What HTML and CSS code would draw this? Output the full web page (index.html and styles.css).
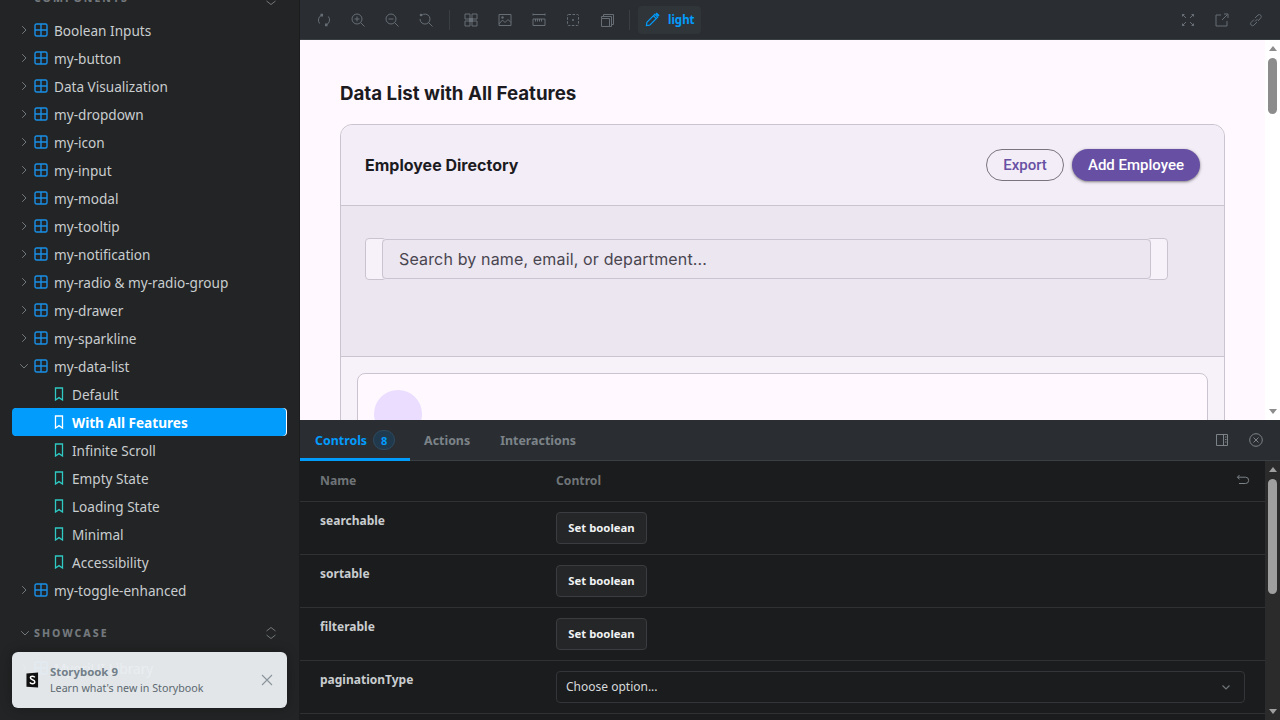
FILE: index.html
```html
<!DOCTYPE html>
<html lang="en">
<head>
<meta charset="utf-8">
<title>Storybook</title>
<link rel="stylesheet" href="styles.css">
</head>
<body>
<svg class="defs" width="0" height="0" aria-hidden="true">
  <symbol id="comp" viewBox="0 0 14 14"><rect x="1" y="1" width="12" height="12" rx="1.5" fill="none" stroke="currentColor" stroke-width="1.4"/><path d="M7 1v12M1 7h12" stroke="currentColor" stroke-width="1.4"/></symbol>
  <symbol id="story" viewBox="0 0 14 14"><path d="M3.500 1h7v12L7 10.600 3.500 13z" fill="none" stroke="currentColor" stroke-width="1.300"/></symbol>
  <symbol id="right" viewBox="0 0 10 10"><path d="M3.200 1.200 7 5 3.200 8.800" fill="none" stroke="currentColor" stroke-width="1"/></symbol>
  <symbol id="down" viewBox="0 0 10 10"><path d="M1.200 3.200 5 7l3.800-3.800" fill="none" stroke="currentColor" stroke-width="1"/></symbol>
  <symbol id="updown" viewBox="0 0 14 14"><path d="M2.500 5 7 1.500 11.500 5M2.500 9 7 12.500 11.500 9" fill="none" stroke="currentColor" stroke-width="1"/></symbol>
</svg>
<div class="app">
  <aside class="sidebar">
    <div class="section-head section-cut">
      <span class="section-title">COMPONENTS</span>
      <svg class="updown"><use href="#updown"/></svg>
    </div>
    <ul class="tree">
      <li class="node"><svg class="chev"><use href="#right"/></svg><svg class="ic-comp"><use href="#comp"/></svg><span>Boolean Inputs</span></li>
      <li class="node"><svg class="chev"><use href="#right"/></svg><svg class="ic-comp"><use href="#comp"/></svg><span>my-button</span></li>
      <li class="node"><svg class="chev"><use href="#right"/></svg><svg class="ic-comp"><use href="#comp"/></svg><span>Data Visualization</span></li>
      <li class="node"><svg class="chev"><use href="#right"/></svg><svg class="ic-comp"><use href="#comp"/></svg><span>my-dropdown</span></li>
      <li class="node"><svg class="chev"><use href="#right"/></svg><svg class="ic-comp"><use href="#comp"/></svg><span>my-icon</span></li>
      <li class="node"><svg class="chev"><use href="#right"/></svg><svg class="ic-comp"><use href="#comp"/></svg><span>my-input</span></li>
      <li class="node"><svg class="chev"><use href="#right"/></svg><svg class="ic-comp"><use href="#comp"/></svg><span>my-modal</span></li>
      <li class="node"><svg class="chev"><use href="#right"/></svg><svg class="ic-comp"><use href="#comp"/></svg><span>my-tooltip</span></li>
      <li class="node"><svg class="chev"><use href="#right"/></svg><svg class="ic-comp"><use href="#comp"/></svg><span>my-notification</span></li>
      <li class="node"><svg class="chev"><use href="#right"/></svg><svg class="ic-comp"><use href="#comp"/></svg><span>my-radio &amp; my-radio-group</span></li>
      <li class="node"><svg class="chev"><use href="#right"/></svg><svg class="ic-comp"><use href="#comp"/></svg><span>my-drawer</span></li>
      <li class="node"><svg class="chev"><use href="#right"/></svg><svg class="ic-comp"><use href="#comp"/></svg><span>my-sparkline</span></li>
      <li class="node"><svg class="chev"><use href="#down"/></svg><svg class="ic-comp"><use href="#comp"/></svg><span>my-data-list</span></li>
      <li class="leaf"><svg class="ic-story"><use href="#story"/></svg><span>Default</span></li>
      <li class="leaf active"><svg class="ic-story"><use href="#story"/></svg><span>With All Features</span></li>
      <li class="leaf"><svg class="ic-story"><use href="#story"/></svg><span>Infinite Scroll</span></li>
      <li class="leaf"><svg class="ic-story"><use href="#story"/></svg><span>Empty State</span></li>
      <li class="leaf"><svg class="ic-story"><use href="#story"/></svg><span>Loading State</span></li>
      <li class="leaf"><svg class="ic-story"><use href="#story"/></svg><span>Minimal</span></li>
      <li class="leaf"><svg class="ic-story"><use href="#story"/></svg><span>Accessibility</span></li>
      <li class="node"><svg class="chev"><use href="#right"/></svg><svg class="ic-comp"><use href="#comp"/></svg><span>my-toggle-enhanced</span></li>
    </ul>
    <div class="section-head section-showcase">
      <svg class="chev-sec"><use href="#down"/></svg>
      <span class="section-title">SHOWCASE</span>
      <svg class="updown"><use href="#updown"/></svg>
    </div>
    <ul class="tree tree-showcase">
      <li class="node"><svg class="chev"><use href="#right"/></svg><svg class="ic-comp"><use href="#comp"/></svg><span>MyoriUI Library</span></li>
    </ul>
    <div class="notice">
      <svg class="sb-logo" viewBox="0 0 14 16"><path d="M0.500 1 13 0v16L0.500 15.400z" fill="#111"/><path d="M9.500 5.200C9 4.200 8.200 3.900 7 3.900c-1.400 0-2.300.7-2.300 1.800 0 2.500 4.800 1.500 4.800 4.300 0 1.300-1.100 2.100-2.600 2.100-1.300 0-2.200-.5-2.700-1.500" fill="none" stroke="#fff" stroke-width="1.500"/></svg>
      <div class="notice-text">
        <div class="notice-title">Storybook 9</div>
        <div class="notice-sub">Learn what's new in Storybook</div>
      </div>
      <svg class="notice-x" viewBox="0 0 12 12"><path d="M1 1l10 10M11 1 1 11" fill="none" stroke="currentColor" stroke-width="1.100"/></svg>
    </div>
  </aside>

  <main class="content">
    <header class="toolbar">
      <button class="tool"><svg viewBox="0 0 14 14"><path d="M2.600 10.500A5.500 5.500 0 0 1 4.500 2.200M11.400 3.500a5.500 5.500 0 0 1-1.900 8.300" fill="none" stroke="currentColor"/><path d="M3.500 .8h2.500v2.700H3.500zM8 10.500h2.500v2.700H8z" fill="currentColor"/></svg></button>
      <button class="tool"><svg viewBox="0 0 14 14"><circle cx="6" cy="6" r="5" fill="none" stroke="currentColor"/><path d="M9.700 9.700 13.500 13.500M6 3.500v5M3.500 6h5" fill="none" stroke="currentColor"/></svg></button>
      <button class="tool"><svg viewBox="0 0 14 14"><circle cx="6" cy="6" r="5" fill="none" stroke="currentColor"/><path d="M9.700 9.700 13.500 13.500M3.500 6h5" fill="none" stroke="currentColor"/></svg></button>
      <button class="tool"><svg viewBox="0 0 14 14"><path d="M2.500 2.500A5 5 0 1 1 1 6M9.700 9.700 13.500 13.500" fill="none" stroke="currentColor"/><circle cx="2" cy="2" r="1.300" fill="currentColor"/></svg></button>
      <span class="tool-sep first"></span>
      <button class="tool"><svg viewBox="0 0 14 14"><path d="M1 1h5v5H1zM8 1h5v5H8zM1 8h5v5H1zM8 8h5v5H8z" fill="none" stroke="currentColor"/><path d="M5 5h4v4H5z" fill="currentColor"/></svg></button>
      <button class="tool"><svg viewBox="0 0 14 14"><path d="M1 1.500h12v11H1z" fill="none" stroke="currentColor"/><path d="M1 11l3.500-4 2.500 2.500 3-3 3 3" fill="none" stroke="currentColor"/><circle cx="4.500" cy="4.500" r="1.200" fill="currentColor"/></svg></button>
      <button class="tool"><svg viewBox="0 0 14 14"><path d="M1 1.500h12M1 .5v2M13 .5v2M1 6h12v6.500H1zM3.500 6v2.500M5.500 6v2.500M7.500 6v2.500M9.500 6v2.500" fill="none" stroke="currentColor"/></svg></button>
      <button class="tool"><svg viewBox="0 0 14 14"><rect x="1.500" y="1.500" width="11" height="11" rx="1" fill="none" stroke="currentColor" stroke-dasharray="2.500 1.500"/><circle cx="7" cy="7" r="1" fill="currentColor"/></svg></button>
      <button class="tool"><svg viewBox="0 0 14 14"><path d="M1.500 5.500h8v8h-8zM1.500 5.500V3.500h10v10h-2M3.500 3.500v-2h10v10h-2" fill="none" stroke="currentColor"/></svg></button>
      <span class="tool-sep second"></span>
      <button class="theme-btn"><svg viewBox="0 0 16 16"><path d="M1.500 14.500 2 11 10.500 2.500 13.500 5.500 5 14z M9 4l3 3" fill="none" stroke="currentColor" stroke-width="1.200"/><path d="M11 2l1.500-1.500 3 3L14 5z" fill="currentColor"/></svg><span>light</span></button>
      <span class="tool-spacer"></span>
      <button class="tool"><svg viewBox="0 0 14 14"><path d="M1 1l4 4M13 1 9 5M1 13l4-4M13 13 9 9" fill="none" stroke="currentColor"/><path d="M1 1h3L1 4zM13 1h-3l3 3zM1 13h3l-3-3zM13 13h-3l3-3z" fill="currentColor"/></svg></button>
      <button class="tool"><svg viewBox="0 0 14 14"><path d="M6 2H1v11h11V8M7 7l5.500-5.500M9 1h4v4" fill="none" stroke="currentColor"/></svg></button>
      <button class="tool"><svg viewBox="0 0 14 14"><path d="M6 8.500 8.500 6M5 6.500 2 9.500a2 2 0 0 0 2.800 2.800L8 9M6 5l3-3a2 2 0 0 1 2.800 2.800L9 8" fill="none" stroke="currentColor"/></svg></button>
    </header>

    <section class="preview">
      <div class="canvas">
        <h1 class="page-title">Data List with All Features</h1>
        <div class="card">
          <div class="card-head">
            <h2 class="card-title">Employee Directory</h2>
            <div class="card-actions">
              <button class="btn-outline">Export</button>
              <button class="btn-primary">Add Employee</button>
            </div>
          </div>
          <div class="filters">
            <div class="search-wrap">
              <div class="search">Search by name, email, or department...</div>
            </div>
          </div>
          <div class="list">
            <div class="item"><div class="avatar"></div></div>
          </div>
        </div>
      </div>
      <div class="scrollbar light">
        <span class="arrow up"></span>
        <span class="thumb thumb-preview"></span>
        <span class="arrow down"></span>
      </div>
    </section>

    <section class="addons">
      <nav class="tabs">
        <div class="tab active">Controls<span class="count">8</span></div>
        <div class="tab">Actions</div>
        <div class="tab">Interactions</div>
        <span class="tabs-spacer"></span>
        <svg class="tab-icon" viewBox="0 0 14 14"><path d="M1.500 1.500h11v11h-11zM8.500 1.500v11" fill="none" stroke="currentColor"/><path d="M10 4h1.500M10 6.500h1.500M10 9h1.500" stroke="currentColor"/></svg>
        <svg class="tab-icon" viewBox="0 0 14 14"><circle cx="7" cy="7" r="6.300" fill="none" stroke="currentColor"/><path d="M4.500 4.500l5 5M9.500 4.500l-5 5" stroke="currentColor"/></svg>
      </nav>
      <div class="panel-body">
        <div class="args">
          <div class="args-head">
            <span class="col-name">Name</span>
            <span class="col-control">Control</span>
            <svg class="undo" viewBox="0 0 14 14"><path d="M3.500 2 1.500 4.200 3.500 6.400M1.500 4.200h8a3 3 0 0 1 0 6.300H3" fill="none" stroke="currentColor"/></svg>
          </div>
          <div class="arg-row">
            <span class="arg-name">searchable</span>
            <button class="set-btn">Set boolean</button>
          </div>
          <div class="arg-row">
            <span class="arg-name">sortable</span>
            <button class="set-btn">Set boolean</button>
          </div>
          <div class="arg-row">
            <span class="arg-name">filterable</span>
            <button class="set-btn">Set boolean</button>
          </div>
          <div class="arg-row">
            <span class="arg-name">paginationType</span>
            <div class="select">Choose option...
              <svg class="select-chev" viewBox="0 0 10 10"><path d="M1.500 3.500 5 7l3.500-3.500" fill="none" stroke="currentColor" stroke-width="1.200"/></svg>
            </div>
          </div>
        </div>
        <div class="scrollbar dark">
          <span class="arrow up"></span>
          <span class="thumb thumb-panel"></span>
          <span class="arrow down"></span>
        </div>
      </div>
    </section>
  </main>
</div>
</body>
</html>
```

FILE: styles.css
```css
* { box-sizing: border-box; }
html, body { margin: 0; height: 100%; overflow: hidden; }
body { font-family: "Noto Sans", sans-serif; background: #222425; }
.defs { position: absolute; }
button { font: inherit; cursor: pointer; }
ul { list-style: none; margin: 0; padding: 0; }
h1, h2 { margin: 0; }

.app { display: flex; width: 1280px; height: 720px; }

/* Sidebar */
.sidebar { position: relative; width: 300px; flex: none; height: 720px; overflow: hidden; background: #222425; color: #c9cdcf; border-right: 1px solid #1b1c1d; }
.section-head { display: flex; align-items: center; height: 28px; padding: 0 20px; }
.section-cut { height: 25px; margin-top: -9px; padding-left: 34px; align-items: flex-start; }
.section-cut .section-title { line-height: 14px; }
.section-title { font-size: 10.5px; font-weight: 800; letter-spacing: 2px; color: #73787c; flex: 1; }
.section-showcase { margin-top: 15px; }
.tree-showcase { margin-top: 7px; }
.chev-sec { width: 10px; height: 10px; color: #73787c; margin-right: 4px; }
.updown { width: 14px; height: 14px; color: #73787c; margin-left: auto; position: relative; left: -1px; }
.section-cut .updown { top: 1px; }
.node, .leaf { display: flex; align-items: center; height: 28px; font-size: 13.6px; font-weight: 400; color: #c9cdcf; }
.node { padding-left: 19px; }
.leaf { margin: 0 13px 0 12px; padding-left: 40px; border-radius: 4px; }
.chev { width: 10px; height: 10px; color: #73787c; flex: none; }
.ic-comp { width: 14px; height: 14px; color: #1a8fe6; margin: 0 6px 0 5px; flex: none; }
.ic-story { width: 14px; height: 14px; color: #2fc8c3; margin-right: 6px; flex: none; }
.leaf.active { background: #029cfd; color: #fff; font-weight: 700; box-shadow: 1px 0 0 #fff; }
.leaf.active .ic-story { color: #fff; }

.notice { position: absolute; left: 12px; top: 652px; width: 275px; height: 56px; background: rgba(234,238,241,.96); border-radius: 6px; display: flex; align-items: center; padding: 0 14px; color: #5c6870; box-shadow: 0 0 12px rgba(0,0,0,.3); }
.sb-logo { width: 13px; height: 16px; margin-right: 11px; flex: none; }
.notice-text { flex: 1; }
.notice-title { font-size: 11.4px; font-weight: 700; line-height: 16px; color: #738089; }
.notice-sub { font-size: 10.7px; line-height: 16px; color: #5c6870; }
.notice-x { width: 12px; height: 12px; color: #8a949b; }

/* Main */
.content { flex: 1; display: flex; flex-direction: column; min-width: 0; height: 720px; }

.toolbar { height: 40px; flex: none; background: #2a2e33; border-bottom: 1px solid #3a3f44; display: flex; align-items: center; padding: 0 7px; color: #666d74; }
.tool { width: 34px; height: 28px; background: none; border: 0; padding: 0; color: inherit; display: flex; align-items: center; justify-content: center; flex: none; }
.tool svg { width: 14px; height: 14px; }
.tool-sep { width: 1px; height: 20px; background: #3a3f44; flex: none; }
.tool-sep.first { margin: 0 4px 0 6px; }
.tool-sep.second { margin: 0 8px 0 5px; }
.theme-btn { display: flex; align-items: center; gap: 8px; width: 63px; height: 28px; padding: 0 7px; background: #30353a; border: 0; border-radius: 4px; color: #029cfd; font-size: 11.5px; font-weight: 700; flex: none; }
.theme-btn svg { width: 15px; height: 15px; flex: none; }
.tool-spacer { flex: 1; }

.preview { height: 380px; flex: none; display: flex; background: #fff9ff; overflow: hidden; }
.canvas { flex: 1; min-width: 0; padding: 40px 40px 0; overflow: hidden; font-family: Inter, sans-serif; }
.page-title { font-size: 18.72px; font-weight: 700; line-height: 28px; color: #1c1b1f; margin: 0 0 16px; }
.card { border: 1px solid #cac4d0; border-radius: 12px; background: #f7f2fa; }
.card-head { height: 81px; display: flex; align-items: center; justify-content: space-between; padding: 0 24px; background: #f3edf7; border-radius: 12px 12px 0 0; border-bottom: 1px solid #cac4d0; }
.card-title { font-size: 16px; font-weight: 700; color: #1c1b1f; }
.card-actions { display: flex; gap: 8px; font-family: Roboto, sans-serif; }
.btn-outline { height: 32px; width: 78px; border: 1px solid #79747e; border-radius: 16px; background: transparent; color: #6750a4; font-size: 15px; font-weight: 500; padding: 0; }
.btn-primary { height: 32px; width: 128px; border: 0; border-radius: 16px; background: #6750a4; color: #fff; font-size: 15px; font-weight: 500; padding: 0; box-shadow: 0 1px 3px 1px rgba(0,0,0,.15), 0 1px 2px rgba(0,0,0,.3); }
.filters { height: 151px; padding: 32px 24px 0; background: #ebe6f0; border-bottom: 1px solid #cac4d0; }
.search-wrap { height: 42px; width: 803px; padding: 0 16px; border: 1px solid #cac4d0; border-radius: 4px; background: #f7f2fa; }
.search { height: 40px; width: 769px; border: 1px solid #cac4d0; border-radius: 4px; background: #ebe6f0; color: #49454f; font-size: 16px; letter-spacing: .15px; line-height: 38px; padding-left: 16px; box-shadow: 0 -1px 0 #ebe6f0, 0 1px 0 #ebe6f0; }
.list { padding: 16px 16px 0; height: 200px; background: #f7f2fa; }
.item { border: 1px solid #cac4d0; border-radius: 8px; background: #fff9ff; padding: 16px; height: 150px; }
.avatar { width: 48px; height: 48px; border-radius: 50%; background: #eaddff; }

.scrollbar { position: relative; width: 15px; flex: none; display: flex; flex-direction: column; align-items: center; }
.scrollbar.light { background: #fff; height: 380px; }
.scrollbar.dark { background: #2b2b2b; }
.thumb { width: 9px; border-radius: 5px; flex: none; }
.thumb-preview { height: 56px; margin-top: 7px; background: #8c8c8c; }
.thumb-panel { height: 115px; margin-top: 7px; background: #9f9f9f; }
.arrow { width: 0; height: 0; border-left: 4.500px solid transparent; border-right: 4.500px solid transparent; flex: none; }
.arrow.up { margin-top: 6px; border-bottom: 5px solid #8c8c8c; }
.arrow.down { margin-top: auto; margin-bottom: 6px; border-top: 5px solid #8c8c8c; }
.scrollbar.dark .arrow.up { border-bottom-color: #9f9f9f; }
.scrollbar.dark .arrow.down { border-top-color: #9f9f9f; }

.addons { flex: 1; min-height: 0; display: flex; flex-direction: column; background: #1b1c1d; }
.tabs { height: 41px; flex: none; background: #2a2e33; border-bottom: 1px solid #3a3f44; display: flex; align-items: stretch; font-size: 12.4px; font-weight: 700; }
.tab { display: flex; align-items: center; padding: 0 15px; height: 41px; color: #7c8388; }
.tab.active { color: #029cfd; border-bottom: 3px solid #029cfd; padding-top: 2px; margin-right: -1px; }
.count { display: flex; align-items: center; justify-content: center; width: 22px; height: 20px; margin-left: 6px; border-radius: 10px; background: #21394d; border: 1px solid #2d4a60; font-size: 11px; color: #029cfd; }
.tabs-spacer { flex: 1; }
.tab-icon { width: 14px; height: 14px; margin: 13px 17px 0 0; color: #7c8388; flex: none; }
.tab-icon:last-child { margin-left: 3px; }

.panel-body { flex: 1; min-height: 0; display: flex; overflow: hidden; }
.args { flex: 1; min-width: 0; color: #c9cdcf; font-size: 12px; }
.args-head { height: 41px; display: flex; align-items: center; padding: 0 15px 2px 20px; border-bottom: 1px solid #2f3133; color: #6f7478; font-weight: 700; font-size: 12.2px; }
.col-name { width: 236px; flex: none; }
.col-control { flex: 1; }
.undo { width: 14px; height: 14px; color: #7c8388; }
.arg-row { height: 53px; display: flex; align-items: flex-start; padding: 10px 20px 0; border-bottom: 1px solid #2f3133; }
.arg-name { width: 236px; flex: none; font-weight: 700; font-size: 12px; color: #c9cdcf; line-height: 18px; }
.set-btn { height: 32px; width: 91px; padding: 0 0 2px; background: #242628; border: 1px solid #3a3c3f; border-radius: 4px; color: #f0f2f3; font-size: 11.3px; font-weight: 700; }
.select { position: relative; height: 32px; width: 689px; border: 1px solid #333538; border-radius: 4px; background: #1b1c1d; color: #d6d9db; font-size: 12px; line-height: 30px; padding-left: 9px; }
.select-chev { position: absolute; right: 13px; top: 10px; width: 10px; height: 10px; color: #6f7478; }
```
